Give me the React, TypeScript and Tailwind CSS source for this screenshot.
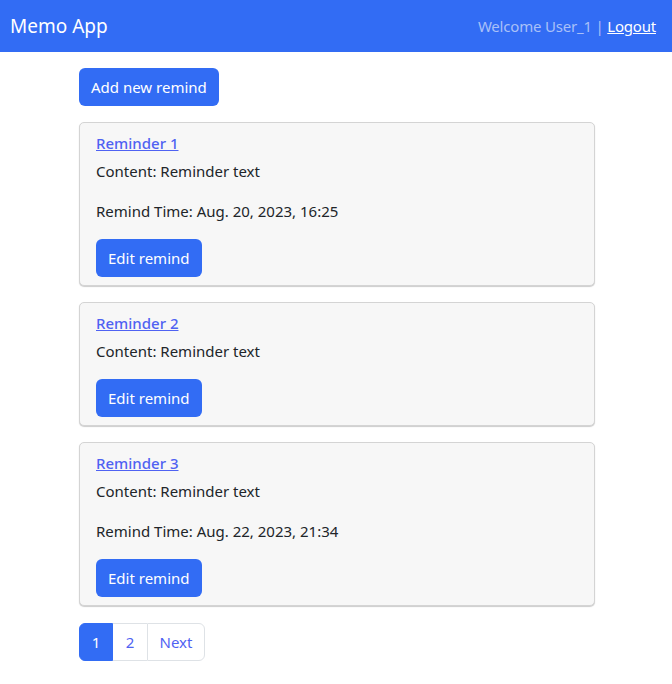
import React from "react";

const reminders = [
  { title: "Reminder 1", content: "Reminder text", time: "Aug. 20, 2023, 16:25" },
  { title: "Reminder 2", content: "Reminder text", time: null },
  { title: "Reminder 3", content: "Reminder text", time: "Aug. 22, 2023, 21:34" },
];

export default function App() {
  return (
    <div className="min-h-[684px] bg-white text-[15px] leading-[24px] text-[#212529]" style={{ fontFamily: '"Noto Sans", "Open Sans", sans-serif' }}>
      <nav className="flex h-[52px] items-center justify-between bg-[#326cf4] pl-[10px] pr-[16px]">
        <span className="text-[19px] text-white">Memo App</span>
        <span className="text-[15px] tracking-[-0.2px] text-[#a9c0f8]">
          Welcome User_1 | <a href="#" className="text-white underline">Logout</a>
        </span>
      </nav>
      <main className="ml-[79px] w-[516px] pt-[16px]">
        <button className="h-[38px] rounded-[6px] bg-[#326cf4] px-[12px] text-white">Add new remind</button>
        <div className="mt-[16px] flex flex-col gap-[16px]">
          {reminders.map((r) => (
            <div key={r.title} className="rounded-[5px] border border-[#d4d4d4] bg-[#f7f7f7] px-[16px] pb-[8px] pt-[8px] shadow-[0_1px_1px_rgba(0,0,0,0.2)]">
              <a href="#" className="mb-[4px] block w-fit font-medium text-[#4f62f2] underline">{r.title}</a>
              <p className="mb-[16px]">Content: {r.content}</p>
              {r.time && <p className="mb-[16px]">Remind Time: {r.time}</p>}
              <button className="h-[38px] rounded-[6px] bg-[#326cf4] px-[12px] text-white">Edit remind</button>
            </div>
          ))}
        </div>
        <div className="mt-[17px] flex h-[38px] w-fit">
          <span className="flex w-[34px] items-center justify-center rounded-l-[6px] border border-[#326cf4] bg-[#326cf4] text-white">1</span>
          <a href="#" className="flex w-[34px] items-center justify-center border-y border-[#dee2e6] text-[#4f62f2]">2</a>
          <a href="#" className="flex w-[58px] items-center justify-center rounded-r-[6px] border border-[#dee2e6] text-[#4f62f2]">Next</a>
        </div>
      </main>
    </div>
  );
}
